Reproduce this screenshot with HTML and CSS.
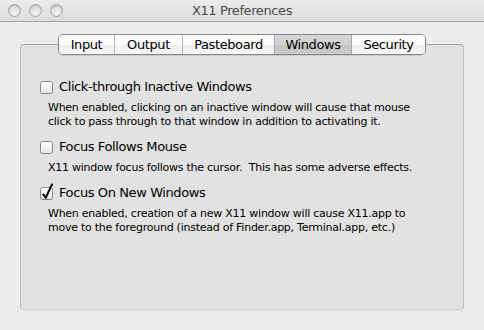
FILE: index.html
```html
<!DOCTYPE html>
<html>
<head>
<meta charset="utf-8">
<title>X11 Preferences</title>
<link rel="stylesheet" href="styles.css">
</head>
<body>
<div class="window">
  <div class="titlebar">
    <div class="lights">
      <span class="light"></span>
      <span class="light"></span>
      <span class="light"></span>
    </div>
    <div class="title">X11 Preferences</div>
    <div class="spacer"></div>
  </div>
  <div class="content">
    <div class="tabs">
      <div class="tab tab-input">Input</div>
      <div class="tab tab-output">Output</div>
      <div class="tab tab-paste">Pasteboard</div>
      <div class="tab tab-windows selected">Windows</div>
      <div class="tab tab-security">Security</div>
    </div>
    <div class="panel">
      <div class="option">
        <div class="check-row">
          <svg class="checkbox" width="14" height="14" viewBox="0 0 14 14"><defs><linearGradient id="g1" x1="0" y1="0" x2="0" y2="1"><stop offset="0" stop-color="#ffffff"/><stop offset="0.5" stop-color="#f4f4f4"/><stop offset="1" stop-color="#e2e2e2"/></linearGradient></defs><rect x="0.5" y="0.5" width="12" height="12" rx="2" fill="url(#g1)" stroke="#858585"/></svg>
          <span class="label">Click-through Inactive Windows</span>
        </div>
        <p class="desc">When enabled, clicking on an inactive window will cause that mouse<br>click to pass through to that window in addition to activating it.</p>
      </div>
      <div class="option">
        <div class="check-row">
          <svg class="checkbox" width="14" height="14" viewBox="0 0 14 14"><rect x="0.5" y="0.5" width="12" height="12" rx="2" fill="url(#g1)" stroke="#858585"/></svg>
          <span class="label">Focus Follows Mouse</span>
        </div>
        <p class="desc">X11 window focus follows the cursor.&nbsp; This has some adverse effects.</p>
      </div>
      <div class="option">
        <div class="check-row">
          <svg class="checkbox" width="14" height="14" viewBox="0 0 14 14"><rect x="0.5" y="0.5" width="12" height="12" rx="2" fill="url(#g1)" stroke="#858585"/><path d="M2.8 6.8 L5.8 10.6 L12.3 -3.2" fill="none" stroke="#111" stroke-width="2.1" stroke-linejoin="miter" stroke-linecap="butt"/></svg>
          <span class="label">Focus On New Windows</span>
        </div>
        <p class="desc">When enabled, creation of a new X11 window will cause X11.app to<br>move to the foreground (instead of Finder.app, Terminal.app, etc.)</p>
      </div>
    </div>
  </div>
</div>
</body>
</html>
```
FILE: styles.css
```css
html, body {
  margin: 0;
  padding: 0;
}
body {
  background: #ececec;
  font-family: "DejaVu Sans", "Noto Sans", sans-serif;
  color: #000;
}
.window {
  width: 484px;
  height: 330px;
  background: #ececec;
  overflow: hidden;
}
.titlebar {
  height: 21px;
  border-bottom: 1px solid #a3a3a3;
  background: linear-gradient(#ececec, #dcdcdc);
  display: grid;
  grid-template-columns: 1fr auto 1fr;
  align-items: center;
}
.lights {
  display: flex;
  gap: 8px;
  padding-left: 8px;
  padding-bottom: 1px;
}
.light {
  width: 11px;
  height: 11px;
  border-radius: 50%;
  border: 1px solid #a2a2a2;
  background: radial-gradient(circle at 50% 75%, #f4f4f4 0%, #e2e2e2 45%, #d0d0d0 100%);
  box-shadow: inset 0 1px 1px rgba(0,0,0,0.14);
}
.title {
  font-size: 13px;
  letter-spacing: -0.4px;
  color: #4a4a4a;
  line-height: 21px;
}
.content {
  padding: 12px 20px 0;
}
.tabs {
  display: flex;
  width: max-content;
  margin: 0 auto;
  height: 21px;
  box-sizing: border-box;
  border: 1px solid #868686;
  border-radius: 5px;
  overflow: hidden;
  position: relative;
  z-index: 1;
  box-shadow: 0 1px 1px rgba(0,0,0,0.12);
}
.tab {
  box-sizing: border-box;
  height: 19px;
  line-height: 19px;
  font-size: 13px;
  letter-spacing: -0.4px;
  text-align: center;
  background: linear-gradient(#ffffff 0%, #fbfbfb 50%, #efefef 51%, #f6f6f6 100%);
  border-left: 1px solid #b5b5b5;
}
.tab-input { width: 55px; border-left: none; }
.tab-output { width: 68px; }
.tab-paste { width: 92px; }
.tab-windows { width: 77px; }
.tab-security { width: 74px; }
.tab.selected {
  background: linear-gradient(#d6d6d6 0%, #d2d2d2 50%, #c4c4c4 51%, #cbcbcb 100%);
  border-left-color: #a8a8a8;
}
.tab.selected + .tab {
  border-left-color: #a8a8a8;
}
.panel {
  margin-top: -11px;
  height: 266px;
  box-sizing: border-box;
  background: #e2e2e2;
  border: 1px solid #bdbdbd;
  border-top-color: #a9a9a9;
  border-bottom-color: #d4d4d4;
  border-radius: 4px;
  padding: 34px 19px 0;
  box-shadow: 0 1px 0 rgba(0,0,0,0.04);
}
.option {
  margin-bottom: 10px;
}
.check-row {
  display: flex;
  align-items: center;
  gap: 5px;
  height: 16px;
}
.checkbox {
  flex: none;
  overflow: visible;
  margin-top: 1px;
}
.label {
  font-size: 13px;
  letter-spacing: -0.4px;
  line-height: 16px;
}
.desc {
  margin: 6px 0 0 8px;
  font-size: 11px;
  letter-spacing: -0.25px;
  line-height: 14px;
}
```
